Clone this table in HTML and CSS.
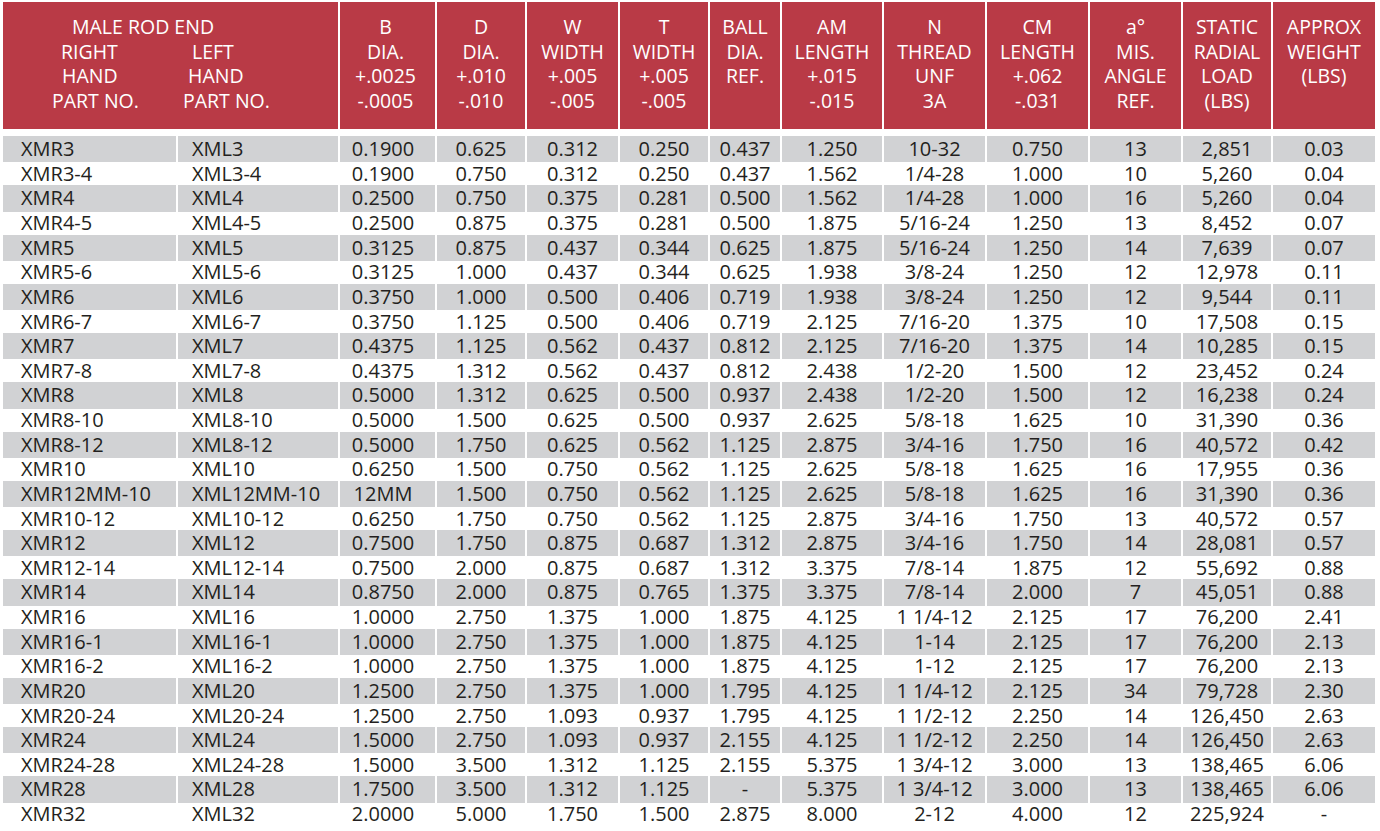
FILE: index.html
```html
<!DOCTYPE html>
<html lang="en">
<head>
<meta charset="utf-8">
<title>Male Rod End</title>
<link rel="stylesheet" href="styles.css">
</head>
<body>
<div class="sheet">
  <div class="head">
    <div class="h h-group">
      <div class="h-title">MALE ROD END</div>
      <div class="h-sub">
        <div class="h-rh"><div class="l1">RIGHT</div><div class="l2">HAND</div><div class="l3">PART NO.</div></div>
        <div class="h-lh"><div class="l1">LEFT</div><div class="l2">HAND</div><div class="l3">PART NO.</div></div>
      </div>
    </div>
    <div class="h h-b">B<br>DIA.<br>+.0025<br>-.0005</div>
    <div class="h">D<br>DIA.<br>+.010<br>-.010</div>
    <div class="h">W<br>WIDTH<br>+.005<br>-.005</div>
    <div class="h">T<br>WIDTH<br>+.005<br>-.005</div>
    <div class="h">BALL<br>DIA.<br>REF.</div>
    <div class="h">AM<br>LENGTH<br>+.015<br>-.015</div>
    <div class="h">N<br>THREAD<br>UNF<br>3A</div>
    <div class="h">CM<br>LENGTH<br>+.062<br>-.031</div>
    <div class="h">a°<br>MIS.<br>ANGLE<br>REF.</div>
    <div class="h">STATIC<br>RADIAL<br>LOAD<br>(LBS)</div>
    <div class="h">APPROX<br>WEIGHT<br>(LBS)</div>
  </div>
  <div class="body">
    <div class="row odd"><span class="c rh">XMR3</span><span class="c lh">XML3</span><span class="c b">0.1900</span><span class="c">0.625</span><span class="c">0.312</span><span class="c">0.250</span><span class="c">0.437</span><span class="c">1.250</span><span class="c">10-32</span><span class="c">0.750</span><span class="c">13</span><span class="c">2,851</span><span class="c">0.03</span></div>
    <div class="row"><span class="c rh">XMR3-4</span><span class="c lh">XML3-4</span><span class="c b">0.1900</span><span class="c">0.750</span><span class="c">0.312</span><span class="c">0.250</span><span class="c">0.437</span><span class="c">1.562</span><span class="c">1/4-28</span><span class="c">1.000</span><span class="c">10</span><span class="c">5,260</span><span class="c">0.04</span></div>
    <div class="row odd"><span class="c rh">XMR4</span><span class="c lh">XML4</span><span class="c b">0.2500</span><span class="c">0.750</span><span class="c">0.375</span><span class="c">0.281</span><span class="c">0.500</span><span class="c">1.562</span><span class="c">1/4-28</span><span class="c">1.000</span><span class="c">16</span><span class="c">5,260</span><span class="c">0.04</span></div>
    <div class="row"><span class="c rh">XMR4-5</span><span class="c lh">XML4-5</span><span class="c b">0.2500</span><span class="c">0.875</span><span class="c">0.375</span><span class="c">0.281</span><span class="c">0.500</span><span class="c">1.875</span><span class="c">5/16-24</span><span class="c">1.250</span><span class="c">13</span><span class="c">8,452</span><span class="c">0.07</span></div>
    <div class="row odd"><span class="c rh">XMR5</span><span class="c lh">XML5</span><span class="c b">0.3125</span><span class="c">0.875</span><span class="c">0.437</span><span class="c">0.344</span><span class="c">0.625</span><span class="c">1.875</span><span class="c">5/16-24</span><span class="c">1.250</span><span class="c">14</span><span class="c">7,639</span><span class="c">0.07</span></div>
    <div class="row"><span class="c rh">XMR5-6</span><span class="c lh">XML5-6</span><span class="c b">0.3125</span><span class="c">1.000</span><span class="c">0.437</span><span class="c">0.344</span><span class="c">0.625</span><span class="c">1.938</span><span class="c">3/8-24</span><span class="c">1.250</span><span class="c">12</span><span class="c">12,978</span><span class="c">0.11</span></div>
    <div class="row odd"><span class="c rh">XMR6</span><span class="c lh">XML6</span><span class="c b">0.3750</span><span class="c">1.000</span><span class="c">0.500</span><span class="c">0.406</span><span class="c">0.719</span><span class="c">1.938</span><span class="c">3/8-24</span><span class="c">1.250</span><span class="c">12</span><span class="c">9,544</span><span class="c">0.11</span></div>
    <div class="row"><span class="c rh">XMR6-7</span><span class="c lh">XML6-7</span><span class="c b">0.3750</span><span class="c">1.125</span><span class="c">0.500</span><span class="c">0.406</span><span class="c">0.719</span><span class="c">2.125</span><span class="c">7/16-20</span><span class="c">1.375</span><span class="c">10</span><span class="c">17,508</span><span class="c">0.15</span></div>
    <div class="row odd"><span class="c rh">XMR7</span><span class="c lh">XML7</span><span class="c b">0.4375</span><span class="c">1.125</span><span class="c">0.562</span><span class="c">0.437</span><span class="c">0.812</span><span class="c">2.125</span><span class="c">7/16-20</span><span class="c">1.375</span><span class="c">14</span><span class="c">10,285</span><span class="c">0.15</span></div>
    <div class="row"><span class="c rh">XMR7-8</span><span class="c lh">XML7-8</span><span class="c b">0.4375</span><span class="c">1.312</span><span class="c">0.562</span><span class="c">0.437</span><span class="c">0.812</span><span class="c">2.438</span><span class="c">1/2-20</span><span class="c">1.500</span><span class="c">12</span><span class="c">23,452</span><span class="c">0.24</span></div>
    <div class="row odd"><span class="c rh">XMR8</span><span class="c lh">XML8</span><span class="c b">0.5000</span><span class="c">1.312</span><span class="c">0.625</span><span class="c">0.500</span><span class="c">0.937</span><span class="c">2.438</span><span class="c">1/2-20</span><span class="c">1.500</span><span class="c">12</span><span class="c">16,238</span><span class="c">0.24</span></div>
    <div class="row"><span class="c rh">XMR8-10</span><span class="c lh">XML8-10</span><span class="c b">0.5000</span><span class="c">1.500</span><span class="c">0.625</span><span class="c">0.500</span><span class="c">0.937</span><span class="c">2.625</span><span class="c">5/8-18</span><span class="c">1.625</span><span class="c">10</span><span class="c">31,390</span><span class="c">0.36</span></div>
    <div class="row odd"><span class="c rh">XMR8-12</span><span class="c lh">XML8-12</span><span class="c b">0.5000</span><span class="c">1.750</span><span class="c">0.625</span><span class="c">0.562</span><span class="c">1.125</span><span class="c">2.875</span><span class="c">3/4-16</span><span class="c">1.750</span><span class="c">16</span><span class="c">40,572</span><span class="c">0.42</span></div>
    <div class="row"><span class="c rh">XMR10</span><span class="c lh">XML10</span><span class="c b">0.6250</span><span class="c">1.500</span><span class="c">0.750</span><span class="c">0.562</span><span class="c">1.125</span><span class="c">2.625</span><span class="c">5/8-18</span><span class="c">1.625</span><span class="c">16</span><span class="c">17,955</span><span class="c">0.36</span></div>
    <div class="row odd"><span class="c rh">XMR12MM-10</span><span class="c lh">XML12MM-10</span><span class="c b">12MM</span><span class="c">1.500</span><span class="c">0.750</span><span class="c">0.562</span><span class="c">1.125</span><span class="c">2.625</span><span class="c">5/8-18</span><span class="c">1.625</span><span class="c">16</span><span class="c">31,390</span><span class="c">0.36</span></div>
    <div class="row"><span class="c rh">XMR10-12</span><span class="c lh">XML10-12</span><span class="c b">0.6250</span><span class="c">1.750</span><span class="c">0.750</span><span class="c">0.562</span><span class="c">1.125</span><span class="c">2.875</span><span class="c">3/4-16</span><span class="c">1.750</span><span class="c">13</span><span class="c">40,572</span><span class="c">0.57</span></div>
    <div class="row odd"><span class="c rh">XMR12</span><span class="c lh">XML12</span><span class="c b">0.7500</span><span class="c">1.750</span><span class="c">0.875</span><span class="c">0.687</span><span class="c">1.312</span><span class="c">2.875</span><span class="c">3/4-16</span><span class="c">1.750</span><span class="c">14</span><span class="c">28,081</span><span class="c">0.57</span></div>
    <div class="row"><span class="c rh">XMR12-14</span><span class="c lh">XML12-14</span><span class="c b">0.7500</span><span class="c">2.000</span><span class="c">0.875</span><span class="c">0.687</span><span class="c">1.312</span><span class="c">3.375</span><span class="c">7/8-14</span><span class="c">1.875</span><span class="c">12</span><span class="c">55,692</span><span class="c">0.88</span></div>
    <div class="row odd"><span class="c rh">XMR14</span><span class="c lh">XML14</span><span class="c b">0.8750</span><span class="c">2.000</span><span class="c">0.875</span><span class="c">0.765</span><span class="c">1.375</span><span class="c">3.375</span><span class="c">7/8-14</span><span class="c">2.000</span><span class="c">7</span><span class="c">45,051</span><span class="c">0.88</span></div>
    <div class="row"><span class="c rh">XMR16</span><span class="c lh">XML16</span><span class="c b">1.0000</span><span class="c">2.750</span><span class="c">1.375</span><span class="c">1.000</span><span class="c">1.875</span><span class="c">4.125</span><span class="c">1 1/4-12</span><span class="c">2.125</span><span class="c">17</span><span class="c">76,200</span><span class="c">2.41</span></div>
    <div class="row odd"><span class="c rh">XMR16-1</span><span class="c lh">XML16-1</span><span class="c b">1.0000</span><span class="c">2.750</span><span class="c">1.375</span><span class="c">1.000</span><span class="c">1.875</span><span class="c">4.125</span><span class="c">1-14</span><span class="c">2.125</span><span class="c">17</span><span class="c">76,200</span><span class="c">2.13</span></div>
    <div class="row"><span class="c rh">XMR16-2</span><span class="c lh">XML16-2</span><span class="c b">1.0000</span><span class="c">2.750</span><span class="c">1.375</span><span class="c">1.000</span><span class="c">1.875</span><span class="c">4.125</span><span class="c">1-12</span><span class="c">2.125</span><span class="c">17</span><span class="c">76,200</span><span class="c">2.13</span></div>
    <div class="row odd"><span class="c rh">XMR20</span><span class="c lh">XML20</span><span class="c b">1.2500</span><span class="c">2.750</span><span class="c">1.375</span><span class="c">1.000</span><span class="c">1.795</span><span class="c">4.125</span><span class="c">1 1/4-12</span><span class="c">2.125</span><span class="c">34</span><span class="c">79,728</span><span class="c">2.30</span></div>
    <div class="row"><span class="c rh">XMR20-24</span><span class="c lh">XML20-24</span><span class="c b">1.2500</span><span class="c">2.750</span><span class="c">1.093</span><span class="c">0.937</span><span class="c">1.795</span><span class="c">4.125</span><span class="c">1 1/2-12</span><span class="c">2.250</span><span class="c">14</span><span class="c">126,450</span><span class="c">2.63</span></div>
    <div class="row odd"><span class="c rh">XMR24</span><span class="c lh">XML24</span><span class="c b">1.5000</span><span class="c">2.750</span><span class="c">1.093</span><span class="c">0.937</span><span class="c">2.155</span><span class="c">4.125</span><span class="c">1 1/2-12</span><span class="c">2.250</span><span class="c">14</span><span class="c">126,450</span><span class="c">2.63</span></div>
    <div class="row"><span class="c rh">XMR24-28</span><span class="c lh">XML24-28</span><span class="c b">1.5000</span><span class="c">3.500</span><span class="c">1.312</span><span class="c">1.125</span><span class="c">2.155</span><span class="c">5.375</span><span class="c">1 3/4-12</span><span class="c">3.000</span><span class="c">13</span><span class="c">138,465</span><span class="c">6.06</span></div>
    <div class="row odd"><span class="c rh">XMR28</span><span class="c lh">XML28</span><span class="c b">1.7500</span><span class="c">3.500</span><span class="c">1.312</span><span class="c">1.125</span><span class="c">-</span><span class="c">5.375</span><span class="c">1 3/4-12</span><span class="c">3.000</span><span class="c">13</span><span class="c">138,465</span><span class="c">6.06</span></div>
    <div class="row"><span class="c rh">XMR32</span><span class="c lh">XML32</span><span class="c b">2.0000</span><span class="c">5.000</span><span class="c">1.750</span><span class="c">1.500</span><span class="c">2.875</span><span class="c">8.000</span><span class="c">2-12</span><span class="c">4.000</span><span class="c">12</span><span class="c">225,924</span><span class="c">-</span></div>
  </div>
</div>
</body>
</html>
```

FILE: styles.css
```css
html, body {
  margin: 0;
  padding: 0;
  background: #ffffff;
}

.sheet {
  margin: 2px 0 0 3px;
  width: 1372px;
  font-family: "Open Sans", "Noto Sans", sans-serif;
  font-weight: 500;
  color: #231f20;
}

.head,
.row {
  display: grid;
  grid-template-columns: 173px 162px 97px 90px 93px 90px 72px 102px 103px 103px 93px 90px 104px;
}

.head {
  height: 127px;
  margin-bottom: 7px;
}

.h {
  box-sizing: border-box;
  background: #b93a46;
  color: #ffffff;
  font-size: 19.5px;
  line-height: 24.6px;
  text-align: center;
  padding-top: 13px;
  border-left: 2px solid #ffffff;
  white-space: nowrap;
}

.h-group {
  grid-column: span 2;
  border-left: 0;
  text-align: left;
}

.h-title {
  padding-left: 69px;
}

.h-sub {
  display: grid;
  grid-template-columns: 173px 162px;
}

.h-rh .l1 { padding-left: 58px; }
.h-rh .l2 { padding-left: 59px; }
.h-rh .l3 { padding-left: 49px; }

.h-lh .l1 { padding-left: 16px; }
.h-lh .l2 { padding-left: 12px; }
.h-lh .l3 { padding-left: 7px; }

.h-b {
  padding-right: 4px;
}

.row {
  height: 22.96px;
}

.row.odd {
  height: 26.3px;
}

.row.odd .c {
  background: #d1d2d4;
}

.c {
  box-sizing: border-box;
  display: flex;
  align-items: center;
  justify-content: center;
  font-size: 20px;
  line-height: 1;
  white-space: nowrap;
  border-left: 2px solid #ffffff;
}

.c.rh {
  border-left: 0;
  justify-content: flex-start;
  padding-left: 18px;
}

.c.lh {
  justify-content: flex-start;
  padding-left: 14px;
}

.c.b {
  padding-right: 9px;
}
```
